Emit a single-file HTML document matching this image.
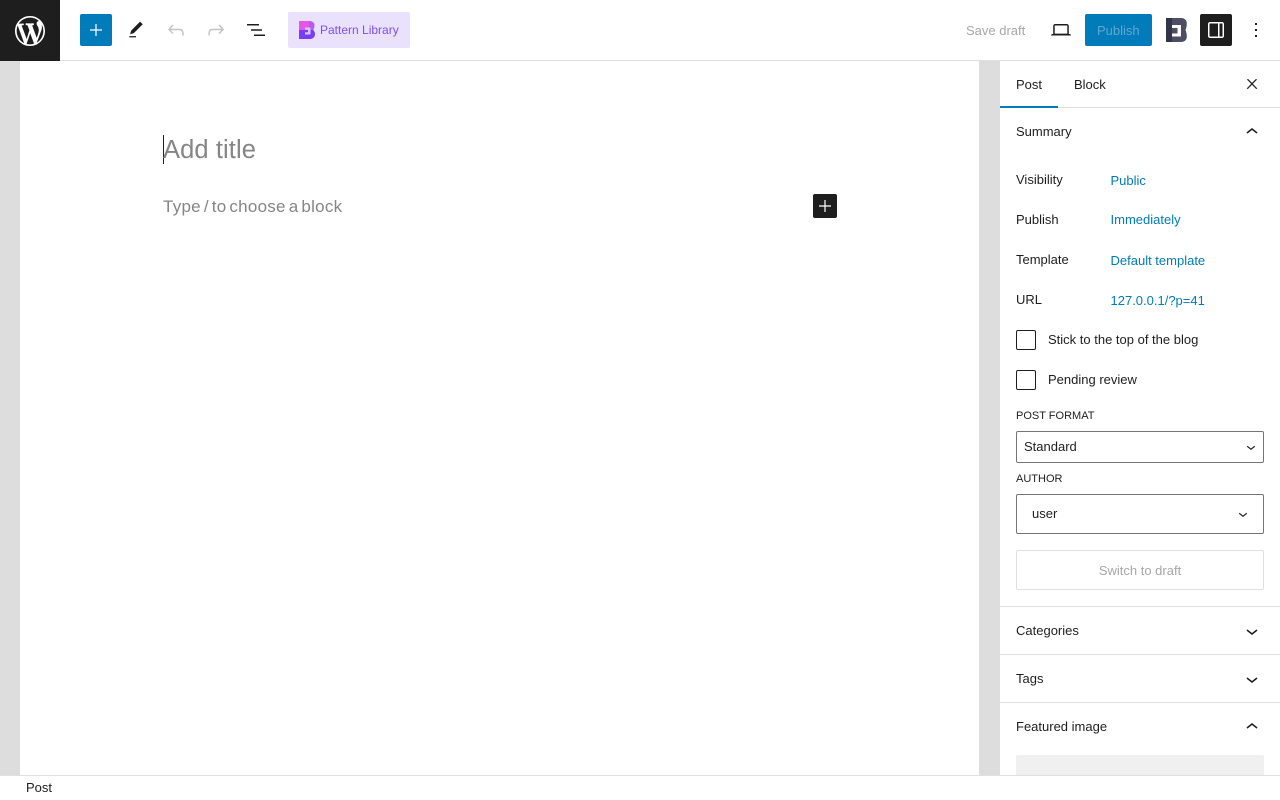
<!DOCTYPE html>
<html lang="en"><head><meta charset="utf-8"><title>Edit Post</title>
<style>
*{box-sizing:border-box}
html,body{margin:0;padding:0;width:1280px;height:800px;overflow:hidden;background:#fff;font-family:"Liberation Sans",sans-serif;font-size:13px;color:#1e1e1e}
.a{position:absolute;white-space:nowrap}
.t{line-height:16px}
.l{color:#007cba}
svg{position:absolute;display:block;fill:currentColor}
.hr{position:absolute;left:1000px;width:280px;height:1px;background:#e0e0e0}
.cb{position:absolute;left:1016px;width:20px;height:20px;border:1px solid #1e1e1e;border-radius:2px;background:#fff}
.sel{position:absolute;left:1016px;width:248px;border:1px solid #757575;border-radius:2px;background:#fff}
</style></head><body>
<!-- gray bands -->
<div class="a" style="left:0;top:61px;width:20px;height:715px;background:#ddd"></div>
<div class="a" style="left:979px;top:61px;width:21px;height:715px;background:#ddd"></div>

<!-- top bar -->
<div class="a" style="left:0;top:60px;width:1280px;height:1px;background:#e0e0e0"></div>
<div class="a" style="left:0;top:0;width:60px;height:61px;background:#1e1e1e"></div>
<svg style="left:12px;top:13px;color:#fff" width="36" height="36" viewBox="-2 -2 24 24"><path d="M20 10c0-5.51-4.49-10-10-10C4.48 0 0 4.49 0 10c0 5.52 4.48 10 10 10 5.51 0 10-4.48 10-10zM7.78 15.37L4.37 6.22c.55-.02 1.17-.08 1.17-.08.5-.06.44-1.13-.06-1.11 0 0-1.45.11-2.37.11-.18 0-.37 0-.58-.01C4.12 2.69 6.87 1.11 10 1.11c2.33 0 4.45.87 6.05 2.34-.68-.11-1.65.39-1.65 1.58 0 .74.45 1.36.9 2.1.35.61.55 1.36.55 2.46 0 1.49-1.4 5-1.4 5l-3.03-8.37c.54-.02.82-.17.82-.17.5-.05.44-1.25-.06-1.22 0 0-1.44.12-2.38.12-.87 0-2.33-.12-2.33-.12-.5-.03-.56 1.2-.06 1.22l.92.08 1.26 3.41zM17.41 10c.24-.64.74-1.87.43-4.25.7 1.29 1.05 2.71 1.05 4.25 0 3.29-1.73 6.24-4.4 7.78.97-2.59 1.94-5.2 2.92-7.78zM6.1 18.09C3.12 16.65 1.11 13.53 1.11 10c0-1.3.23-2.48.72-3.59C3.25 10.3 4.67 14.2 6.1 18.09zm4.03-6.63l2.58 6.98c-.86.29-1.76.45-2.71.45-.79 0-1.57-.11-2.29-.33.81-2.38 1.62-4.74 2.42-7.1z"/></svg>

<div class="a" style="left:80px;top:14px;width:32px;height:32px;background:#007cba;border-radius:2px"></div>
<svg style="left:84px;top:18px;color:#fff" width="24" height="24" viewBox="0 0 24 24"><path d="M18 11.400h-5.400V6h-1.200v5.400H6v1.200h5.400V18h1.200v-5.400H18z"/></svg>
<svg style="left:126px;top:20px" width="20" height="20" viewBox="0 0 24 24"><path d="M20.100 5.100L16.900 2 6.200 12.700l-1.300 4.400 4.500-1.300L20.100 5.100zM4 20.800h8v-1.500H4v1.500z"/></svg>
<svg style="left:164px;top:18px;color:#c4c4c4" width="24" height="24" viewBox="0 0 24 24"><path d="M18.300 11.700c-.6-.6-1.400-.9-2.300-.9H6.700l2.900-3.300-1.100-1-4.500 5L8.500 16l1-1-2.700-2.700H16c.5 0 .9.2 1.300.5 1 1 1 3.400 1 4.500v.3h1.500v-.2c0-1.500 0-4.300-1.500-5.700z"/></svg>
<svg style="left:204px;top:18px;color:#c4c4c4" width="24" height="24" viewBox="0 0 24 24"><path d="M15.600 6.500l-1.100 1 2.900 3.300H8c-.9 0-1.700.3-2.300.9-1.400 1.500-1.400 4.200-1.400 5.600v.2h1.500v-.3c0-1.100 0-3.500 1-4.500.3-.3.7-.5 1.300-.5h9.200L14.500 15l1.100 1.100 4.600-4.600-4.600-5z"/></svg>
<svg style="left:244px;top:18px" width="24" height="24" viewBox="0 0 24 24"><path d="M3 6h12v1.500H3V6zm4 5.200h11v1.500H7v-1.500zM10 16.500h11V18H10v-1.500z"/></svg>

<div class="a" style="left:288px;top:12px;width:122px;height:36px;background:#eae2fd;border-radius:2px"></div>
<svg style="left:299px;top:21px" width="16" height="18" viewBox="0 0 16 18"><path fill="#e356e6" d="M0 0h10v9H0z"/><path fill="#b45cf2" d="M10 0h.8C13.500 0 15.500 1.800 15.500 4.500c0 1.700-.5 3.300-1.300 4.500H10z"/><path fill="#7a3cff" d="M0 9h14.200c1.100 1 1.800 2.400 1.800 4 0 3-2.200 5-5 5H0z"/><path fill="#d9c8fd" d="M6 6.500h5.500v7H6v-2.200h3V8.700H6z"/></svg>
<div class="a t" style="left:320px;top:22px;font-size:12px;color:#7c4df5">Pattern Library</div>

<div class="a t" style="left:966px;top:22.500px;color:#a7a7a7">Save draft</div>
<svg style="left:1049px;top:18px" width="24" height="24" viewBox="0 0 24 24"><path d="M20.500 16h-.7V8c0-1.100-.9-2-2-2H6.200c-1.100 0-2 .9-2 2v8h-.7c-.8 0-1.500.7-1.500 1.500h20c0-.8-.7-1.500-1.500-1.500zM5.700 8c0-.3.2-.5.5-.5h11.600c.3 0 .5.2.5.5v7.600H5.700V8z"/></svg>
<div class="a" style="left:1085px;top:14px;width:67px;height:32px;background:#007cba;border-radius:2px"></div>
<div class="a t" style="left:1097px;top:22.500px;color:#5fa8cf">Publish</div>
<svg style="left:1165px;top:18px" width="22" height="24" viewBox="0 0 22 24"><path fill="#33334a" d="M1 0h6v24H1z"/><path fill="#4d4d63" d="M7 0h9c3.500 0 5.800 2 5.800 5.500 0 2.500-.5 4.700-1.300 6.500.8 1.800 1.300 4 1.300 6.500 0 3.500-2.300 5.500-5.800 5.500H7z"/><path fill="#fff" d="M7 7h9v11.500H7v-3h5.500v-5.500H7z"/></svg>
<div class="a" style="left:1200px;top:14px;width:32px;height:32px;background:#1e1e1e;border-radius:2px"></div>
<svg style="left:1204px;top:18px;color:#fff" width="24" height="24" viewBox="0 0 24 24"><path d="M18 4H6c-1.100 0-2 .9-2 2v12c0 1.100.9 2 2 2h12c1.100 0 2-.9 2-2V6c0-1.100-.9-2-2-2zm-4 14.500H6c-.3 0-.5-.2-.5-.5V6c0-.3.2-.5.5-.5h8v13zm4.500-.5c0 .3-.2.5-.5.5h-2.500v-13H18c.3 0 .5.2.5.5v12z"/></svg>
<svg style="left:1244px;top:18px" width="24" height="24" viewBox="0 0 24 24"><path d="M13 19h-2v-2h2v2zm0-6h-2v-2h2v2zm0-6h-2V5h2v2z"/></svg>

<!-- editor -->
<div class="a" style="left:163px;top:135px;width:1px;height:29px;background:#1e1e1e"></div>
<div class="a" style="left:163px;top:134px;font-size:25.500px;line-height:32px;color:#858585;letter-spacing:.1px">Add title</div>
<div class="a" style="left:163px;top:196px;font-size:17px;line-height:22px;color:#858585;letter-spacing:.25px;word-spacing:-2px">Type / to choose a block</div>
<div class="a" style="left:813px;top:194px;width:24px;height:24px;background:#1e1e1e;border-radius:2px"></div>
<svg style="left:813px;top:194px;color:#fff" width="24" height="24" viewBox="0 0 24 24"><path d="M18 11.400h-5.400V6h-1.200v5.400H6v1.200h5.400V18h1.200v-5.400H18z"/></svg>

<!-- sidebar -->
<div class="a t" style="left:1016px;top:77px">Post</div>
<div class="a t" style="left:1074px;top:77px">Block</div>
<div class="hr" style="top:107px"></div>
<div class="a" style="left:1000px;top:106px;width:58px;height:2px;background:#007cba"></div>
<svg style="left:1244px;top:76px" width="16" height="16" viewBox="0 0 24 24"><path d="M13 11.800l6.100-6.300-1-1-6.100 6.200-6.100-6.200-1 1 6.100 6.300-6.500 6.700 1 1 6.500-6.600 6.500 6.600 1-1z" stroke="currentColor" stroke-width=".6"/></svg>

<div class="a t" style="left:1016px;top:123.500px">Summary</div>
<svg style="left:1240px;top:120px" width="24" height="24" viewBox="0 0 24 24"><path d="M6.500 12.400L12 8l5.500 4.400-.9 1.200L12 10l-4.500 3.600-1-1.200z"/></svg>

<div class="a t" style="left:1016px;top:172px">Visibility</div>
<div class="a t l" style="left:1110.500px;top:173px">Public</div>
<div class="a t" style="left:1016px;top:212px">Publish</div>
<div class="a t l" style="left:1110.500px;top:212px">Immediately</div>
<div class="a t" style="left:1016px;top:252px">Template</div>
<div class="a t l" style="left:1110.500px;top:253px">Default template</div>
<div class="a t" style="left:1016px;top:292px">URL</div>
<div class="a t l" style="left:1110.500px;top:293px">127.0.0.1/?p=41</div>

<div class="cb" style="top:330px"></div>
<div class="a t" style="left:1048px;top:332px">Stick to the top of the blog</div>
<div class="cb" style="top:370px"></div>
<div class="a t" style="left:1048px;top:372px">Pending review</div>

<div class="a t" style="left:1016px;top:408px;font-size:11px">POST FORMAT</div>
<div class="sel" style="top:431px;height:32px"></div>
<div class="a t" style="left:1024px;top:439px">Standard</div>
<svg style="left:1242px;top:438px" width="18" height="18" viewBox="0 0 24 24"><path d="M17.500 11.600L12 16l-5.500-4.400.9-1.200L12 14l4.500-3.600 1 1.200z"/></svg>

<div class="a t" style="left:1016px;top:471px;font-size:11px">AUTHOR</div>
<div class="sel" style="top:494px;height:40px"></div>
<div class="a t" style="left:1032px;top:506px">user</div>
<svg style="left:1234px;top:505px" width="18" height="18" viewBox="0 0 24 24"><path d="M17.500 11.600L12 16l-5.500-4.400.9-1.200L12 14l4.500-3.600 1 1.200z"/></svg>

<div class="a" style="left:1016px;top:550px;width:248px;height:40px;border:1px solid #e0e0e0;border-radius:2px;background:#fff"></div>
<div class="a t" style="left:1016px;top:563px;width:248px;text-align:center;color:#a7a7a7">Switch to draft</div>

<div class="hr" style="top:606px"></div>
<div class="a t" style="left:1016px;top:623px">Categories</div>
<svg style="left:1240px;top:619px" width="24" height="24" viewBox="0 0 24 24"><path d="M17.500 11.600L12 16l-5.500-4.400.9-1.200L12 14l4.500-3.600 1 1.200z"/></svg>
<div class="hr" style="top:654px"></div>
<div class="a t" style="left:1016px;top:671px">Tags</div>
<svg style="left:1240px;top:667px" width="24" height="24" viewBox="0 0 24 24"><path d="M17.500 11.600L12 16l-5.500-4.400.9-1.200L12 14l4.500-3.600 1 1.200z"/></svg>
<div class="hr" style="top:702px"></div>
<div class="a t" style="left:1016px;top:719px">Featured image</div>
<svg style="left:1240px;top:715px" width="24" height="24" viewBox="0 0 24 24"><path d="M6.500 12.400L12 8l5.500 4.400-.9 1.200L12 10l-4.500 3.600-1-1.200z"/></svg>
<div class="a" style="left:1016px;top:755px;width:248px;height:21px;background:#f0f0f0;border-radius:2px 2px 0 0"></div>

<!-- footer -->
<div class="a" style="left:0;top:775px;width:1280px;height:25px;background:#fff;border-top:1px solid #e0e0e0"></div>
<div class="a t" style="left:26px;top:780px">Post</div>
</body></html>
